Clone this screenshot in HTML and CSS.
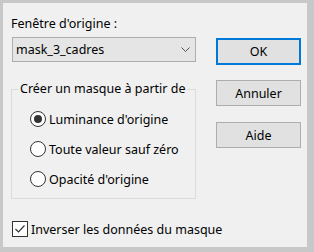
FILE: index.html
```html
<!DOCTYPE html>
<html lang="fr">
<head>
  <meta charset="UTF-8" />
  <title>Masque</title>
  <link rel="stylesheet" href="styles.css">
</head>
<body>
  <div class="dialog">
    <div class="left">
      <div class="label">Fenêtre d'origine :</div>
      <div class="combo">
        <span>mask_3_cadres</span>
        <svg class="chevron" width="9" height="5" viewBox="0 0 9 5"><polyline points="0.5,0.5 4.5,4.5 8.5,0.5" fill="none" stroke="#555" stroke-width="1"/></svg>
      </div>
      <fieldset class="group">
        <legend>Créer un masque à partir de</legend>
        <div class="radio-row"><span class="radio checked"></span>Luminance d'origine</div>
        <div class="radio-row"><span class="radio"></span>Toute valeur sauf zéro</div>
        <div class="radio-row"><span class="radio"></span>Opacité d'origine</div>
      </fieldset>
      <div class="check-row">
        <span class="check">
          <svg width="14" height="14" viewBox="0 0 14 14"><polyline points="2.5,7 5.5,10 11.5,3.5" fill="none" stroke="#333" stroke-width="1.2"/></svg>
        </span>Inverser les données du masque
      </div>
    </div>
    <div class="right">
      <button class="btn ok">OK</button>
      <button class="btn">Annuler</button>
      <button class="btn">Aide</button>
    </div>
  </div>
</body>
</html>
```

FILE: styles.css
```css
body {
  margin: 0;
  background: #c8c8c8;
  font-family: "Noto Sans", "Open Sans", sans-serif;
  font-size: 12.5px;
  color: #000;
}
.dialog {
  margin: 3px 7px 5px 3px;
  width: 304px;
  height: 244px;
  background: #f0f0f0;
  display: flex;
}
.left {
  width: 185px;
  margin-left: 8px;
  display: flex;
  flex-direction: column;
  white-space: nowrap;
}
.label {
  margin-top: 12px;
  line-height: 17px;
}
.combo {
  margin-top: 5px;
  margin-left: 1px;
  height: 23px;
  border: 1px solid #adadad;
  background: #e5e5e5;
  display: flex;
  align-items: center;
  justify-content: space-between;
  padding: 0 5px 0 3px;
}
.chevron {
  display: block;
}
.group {
  margin: 19px 0 0 0;
  padding: 7px 0 4px 0;
  border: 1px solid #dcdcdc;
  min-width: 0;
}
.group legend {
  margin-left: 6px;
  padding: 0 2px;
  line-height: 16px;
  white-space: nowrap;
}
.radio-row {
  height: 30px;
  padding-left: 18px;
  display: flex;
  align-items: center;
}
.radio {
  width: 14px;
  height: 14px;
  border: 1px solid #333;
  border-radius: 50%;
  background: #fff;
  margin-right: 3px;
  display: flex;
  align-items: center;
  justify-content: center;
}
.radio.checked::after {
  content: "";
  width: 8px;
  height: 8px;
  border-radius: 50%;
  background: #333;
}
.check-row {
  margin-top: 22px;
  margin-left: 1px;
  height: 16px;
  display: flex;
  align-items: center;
}
.check {
  width: 14px;
  height: 14px;
  border: 1px solid #333;
  background: #fff;
  margin-right: 3px;
  display: flex;
  align-items: center;
  justify-content: center;
}
.check svg {
  display: block;
}
.right {
  margin-left: 20px;
  width: 85px;
  padding-top: 35px;
  display: flex;
  flex-direction: column;
  gap: 16px;
}
.btn {
  height: 26px;
  border: 1px solid #adadad;
  background: #e1e1e1;
  font-family: inherit;
  font-size: 12.5px;
  color: #000;
  padding: 0;
}
.btn.ok {
  border: 2px solid #0078d7;
  height: 27px;
  margin-bottom: -1px;
}
```
